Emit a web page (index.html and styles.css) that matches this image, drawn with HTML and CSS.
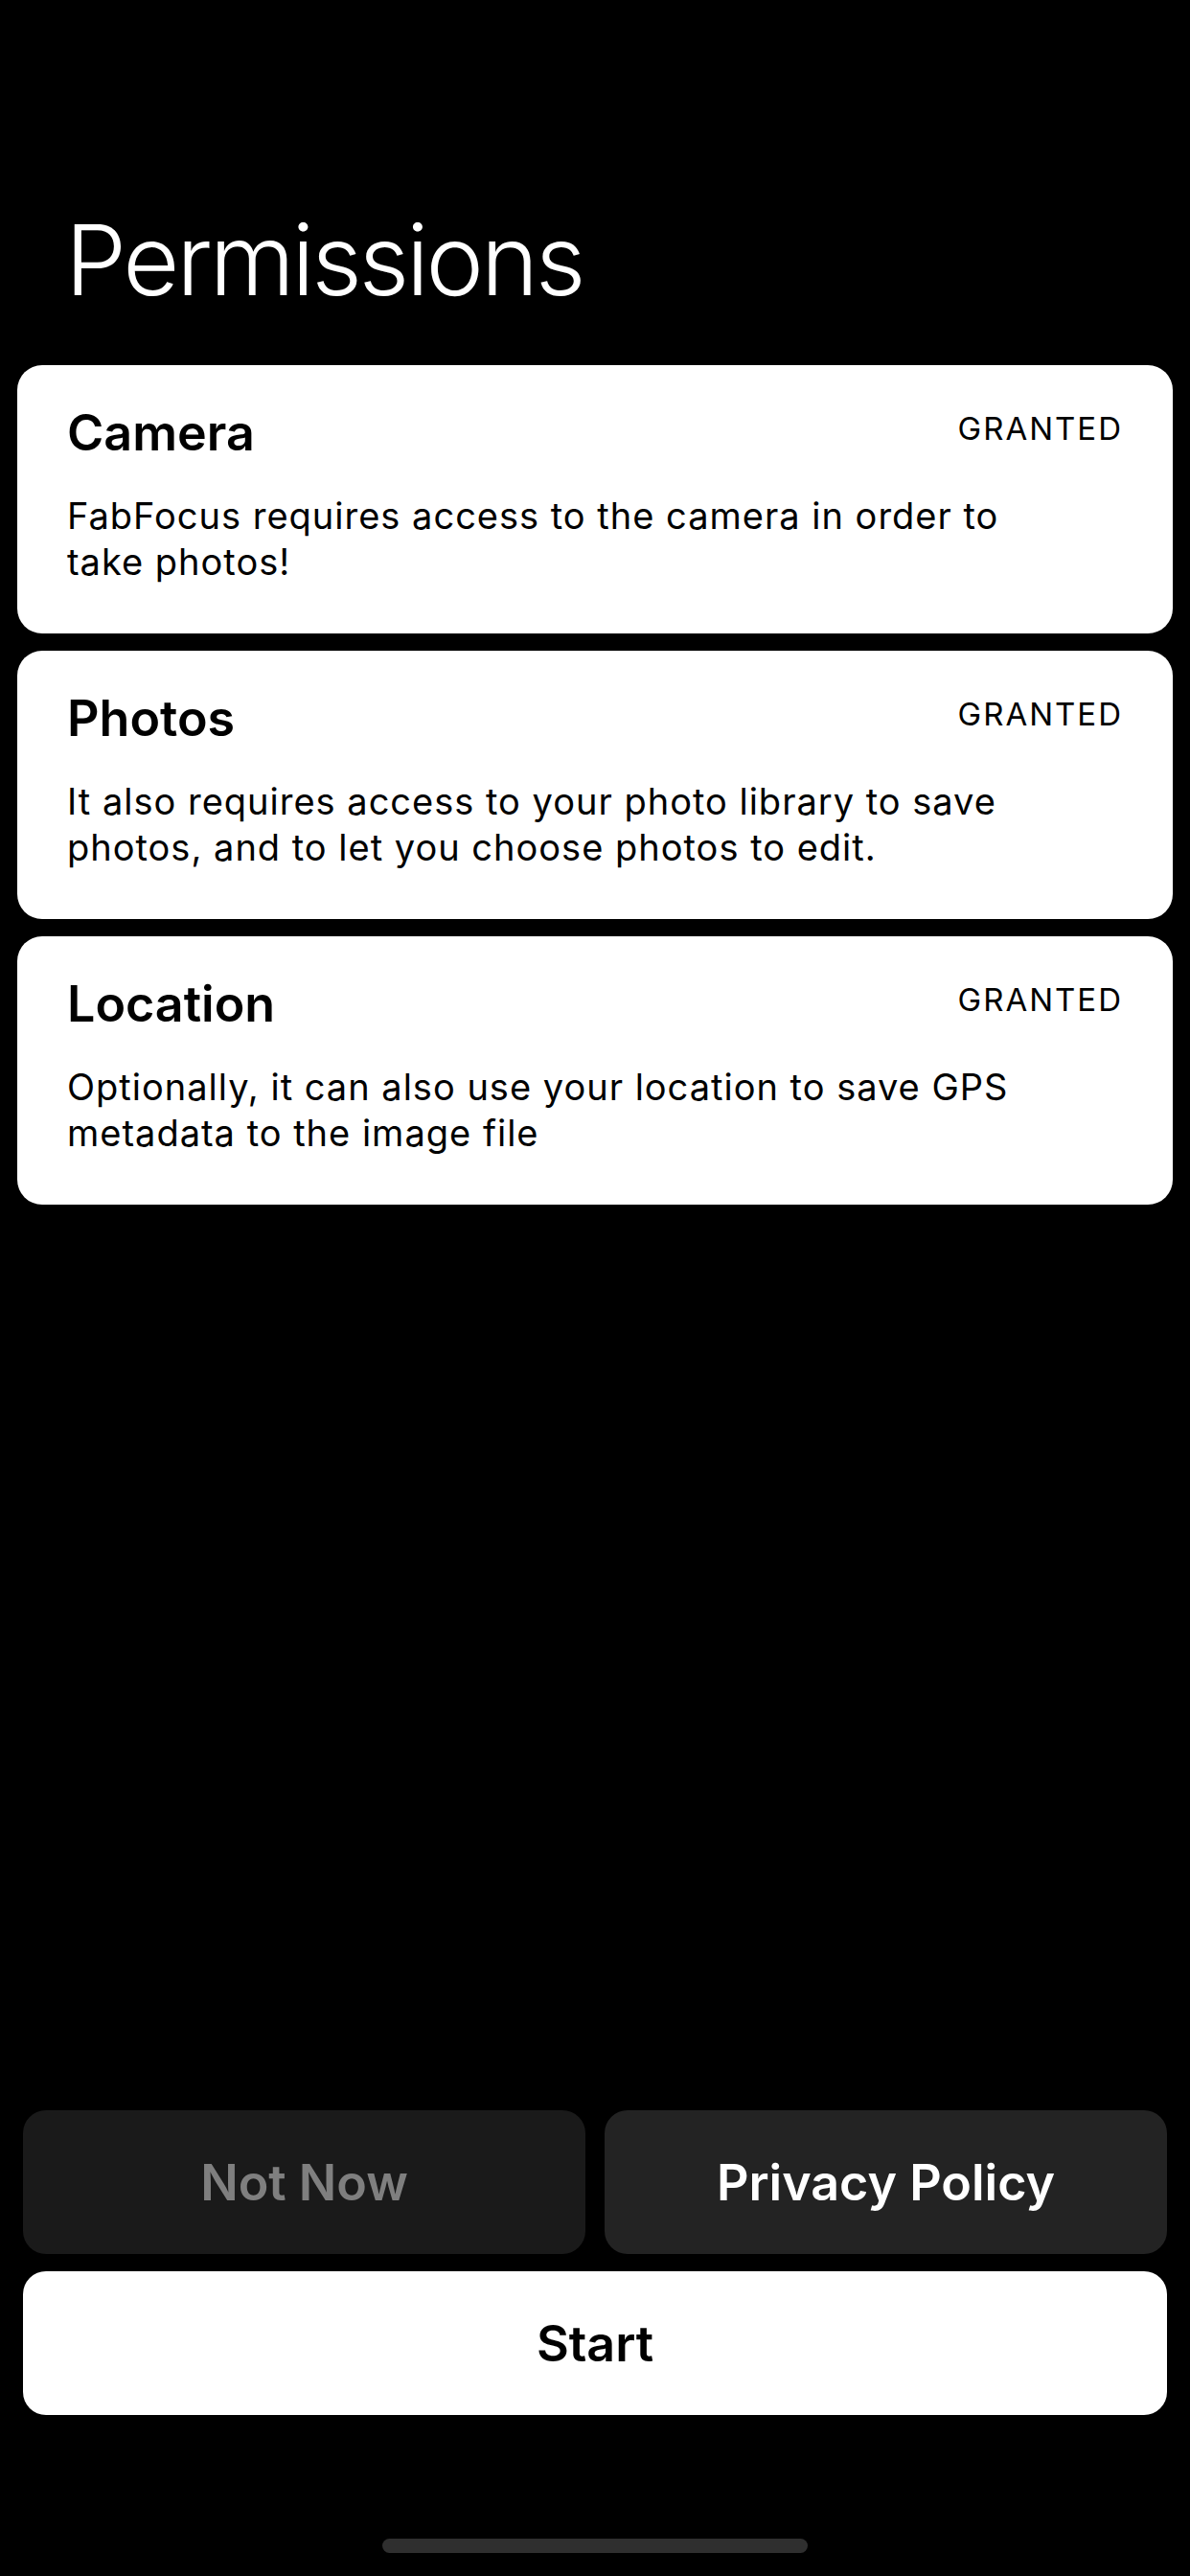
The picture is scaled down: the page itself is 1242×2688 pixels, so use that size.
FILE: index.html
```html
<!DOCTYPE html>
<html lang="en">
<head>
    <meta charset="UTF-8">
    <meta name="viewport" content="width=device-width, initial-scale=1.0">
    <title>Permissions</title>
    <link rel="stylesheet" href="styles.css">
</head>
<body>
    <div class="screen">
        <h1 class="page-title">Permissions</h1>

        <div class="cards">
            <div class="card">
                <div class="card-head">
                    <h2>Camera</h2>
                    <span class="status">GRANTED</span>
                </div>
                <p>FabFocus requires access to the camera in order to<br>take photos!</p>
            </div>
            <div class="card">
                <div class="card-head">
                    <h2>Photos</h2>
                    <span class="status">GRANTED</span>
                </div>
                <p>It also requires access to your photo library to save<br>photos, and to let you choose photos to edit.</p>
            </div>
            <div class="card">
                <div class="card-head">
                    <h2>Location</h2>
                    <span class="status">GRANTED</span>
                </div>
                <p>Optionally, it can also use your location to save GPS<br>metadata to the image file</p>
            </div>
        </div>

        <div class="actions">
            <div class="action-row">
                <button class="btn btn-muted">Not Now</button>
                <button class="btn btn-dark">Privacy Policy</button>
            </div>
            <button class="btn btn-light">Start</button>
        </div>

        <div class="home-indicator"></div>
    </div>
</body>
</html>
```

FILE: styles.css
```css
html, body {
    margin: 0;
    padding: 0;
    background-color: #000;
}
body {
    font-family: Inter, "Noto Sans", sans-serif;
    color: #000;
}
.screen {
    display: flex;
    flex-direction: column;
    min-height: 2688px;
    box-sizing: border-box;
}
.page-title {
    margin: 209px 0 0 0;
    padding-left: 68px;
    font-size: 102px;
    line-height: 124px;
    font-weight: 300;
    color: #fff;
    letter-spacing: -3.2px;
}
.cards {
    display: flex;
    flex-direction: column;
    gap: 18px;
    margin: 48px 18px 0 18px;
}
.card {
    background-color: #fff;
    border-radius: 26px;
    padding: 40px 54px 51px 52px;
}
.card-head {
    display: flex;
    justify-content: space-between;
    align-items: flex-start;
}
.card h2 {
    margin: 0;
    font-size: 52px;
    line-height: 62px;
    font-weight: 600;
}
.status {
    margin-top: 6px;
    margin-right: -2px;
    font-size: 33px;
    line-height: 40px;
    letter-spacing: 2px;
}
.card p {
    margin: 31px 0 0 0;
    font-size: 38px;
    line-height: 48px;
    letter-spacing: 1px;
    white-space: nowrap;
}
.actions {
    margin: auto 24px 0 24px;
    display: flex;
    flex-direction: column;
    gap: 18px;
}
.action-row {
    display: flex;
    gap: 20px;
}
.btn {
    flex: 1;
    height: 150px;
    border: none;
    border-radius: 24px;
    font-family: Inter, "Noto Sans", sans-serif;
    font-size: 52px;
    font-weight: 600;
    cursor: pointer;
}
.btn-muted {
    background-color: #1a1a1a;
    color: #7f7f7f;
}
.btn-dark {
    background-color: #232323;
    color: #fff;
}
.btn-light {
    flex: none;
    background-color: #fff;
    color: #000;
}
.home-indicator {
    width: 444px;
    height: 15px;
    margin: 129px auto 24px auto;
    border-radius: 8px;
    background-color: #2f2f2f;
}
```
